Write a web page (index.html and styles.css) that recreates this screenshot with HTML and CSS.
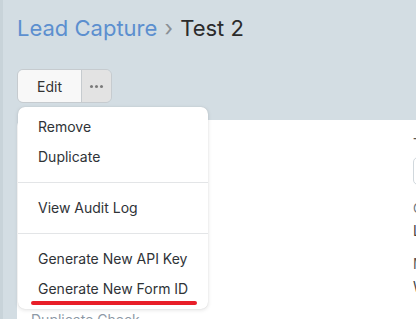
FILE: index.html
```html
<!DOCTYPE html>
<html lang="en">
<head>
  <meta charset="UTF-8">
  <meta name="viewport" content="width=device-width, initial-scale=1.0">
  <title>Test 2 - Lead Capture</title>
  <link rel="stylesheet" href="styles.css">
</head>
<body>
  <div class="page">
    <div class="page-head">
      <div class="breadcrumb">
        <a class="crumb-link" href="#">Lead Capture</a>
        <span class="crumb-sep">›</span>
        <span class="crumb-current">Test 2</span>
      </div>
    </div>

    <div class="actions">
      <div class="btn-group">
        <button type="button" class="btn btn-edit">Edit</button>
        <button type="button" class="btn btn-more" aria-label="More">
          <span class="dot"></span><span class="dot"></span><span class="dot"></span>
        </button>
      </div>

      <ul class="menu">
        <li class="menu-item">Remove</li>
        <li class="menu-item">Duplicate</li>
        <li class="menu-divider"></li>
        <li class="menu-item">View Audit Log</li>
        <li class="menu-divider"></li>
        <li class="menu-item">Generate New API Key</li>
        <li class="menu-item">Generate New Form ID</li>
        <li class="mark"></li>
      </ul>
    </div>

    <div class="card">
      <div class="col-left">
        <div class="section-label">Duplicate Check</div>
      </div>
      <div class="col-right">
        <div class="field-label">Title</div>
        <div class="field-input">Test 2</div>
        <div class="field-small">Customer can fill this form</div>
        <div class="field-value">Login Required</div>
        <div class="field-label spaced">Max Attachment Size</div>
        <div class="field-value">Web Form</div>
      </div>
    </div>
  </div>
</body>
</html>
```

FILE: styles.css
```css
* {
  box-sizing: border-box;
}
body {
  margin: 0;
  font-family: Inter, "Noto Sans", sans-serif;
  background: #d3dde3;
  color: #333;
  overflow: hidden;
}
.page {
  min-height: 100vh;
  border-left: 3px solid #c8d3d9;
  padding-left: 14px;
}
.page-head {
  padding-top: 13px;
}
.breadcrumb {
  font-size: 22px;
  line-height: 30px;
  white-space: nowrap;
}
.crumb-link {
  color: #5c8fcf;
  text-decoration: none;
}
.crumb-sep {
  color: #8a8f94;
  margin: 0 1px;
}
.crumb-current {
  color: #2b2b2b;
}
.actions {
  position: relative;
  margin-top: 26px;
  height: 34px;
}
.btn-group {
  display: inline-flex;
  height: 34px;
  border: 1px solid #c6cbcf;
  border-radius: 6px;
  overflow: hidden;
}
.btn {
  font-family: inherit;
  border: none;
  margin: 0;
  cursor: pointer;
}
.btn-edit {
  width: 64px;
  background: #f8f8f8;
  color: #333;
  font-size: 14px;
  border-right: 1px solid #c6cbcf;
}
.btn-more {
  width: 29px;
  background: #e3e3e3;
  display: flex;
  align-items: center;
  justify-content: center;
  gap: 2px;
  padding: 0;
}
.dot {
  width: 3px;
  height: 3px;
  border-radius: 50%;
  background: #7a7a7a;
}
.menu {
  position: absolute;
  left: 1px;
  top: calc(100% + 4px);
  width: 190px;
  margin: 0;
  padding: 5px 0;
  list-style: none;
  background: #fff;
  border-radius: 7px;
  box-shadow: 0 1px 4px rgba(0, 0, 0, 0.12), 0 0 1px rgba(0, 0, 0, 0.15);
  z-index: 2;
}
.menu-item {
  height: 30px;
  line-height: 30px;
  padding-left: 20px;
  font-size: 14px;
  color: #2f3337;
  white-space: nowrap;
}
.menu-divider {
  height: 1px;
  margin: 10px 0;
  background: #e3e5e7;
}
.mark {
  position: absolute;
  left: 13px;
  top: 194px;
  width: 166px;
  height: 4px;
  border-radius: 2px;
  background: #e81e28;
}
.card {
  margin-top: 17px;
  background: #fff;
  border-top-left-radius: 6px;
  min-height: 300px;
  padding: 15px 0 0 14px;
  display: grid;
  grid-template-columns: 382px 1fr;
}
.section-label {
  margin-top: 175px;
  font-size: 14px;
  line-height: 20px;
  color: #8d99a6;
}
.col-right {
  white-space: nowrap;
}
.field-label {
  font-size: 14px;
  line-height: 18px;
  color: #555;
}
.field-label.spaced {
  margin-top: 14px;
}
.field-input {
  margin-top: 4px;
  width: 200px;
  height: 28px;
  border: 1px solid #d1d8dd;
  border-radius: 5px;
  padding: 4px 8px;
  font-size: 13px;
  color: #333;
}
.field-small {
  margin-top: 14px;
  font-size: 13px;
  line-height: 18px;
  color: #6c7680;
}
.field-value {
  margin-top: 4px;
  font-size: 14px;
  line-height: 20px;
  color: #444;
}
```
